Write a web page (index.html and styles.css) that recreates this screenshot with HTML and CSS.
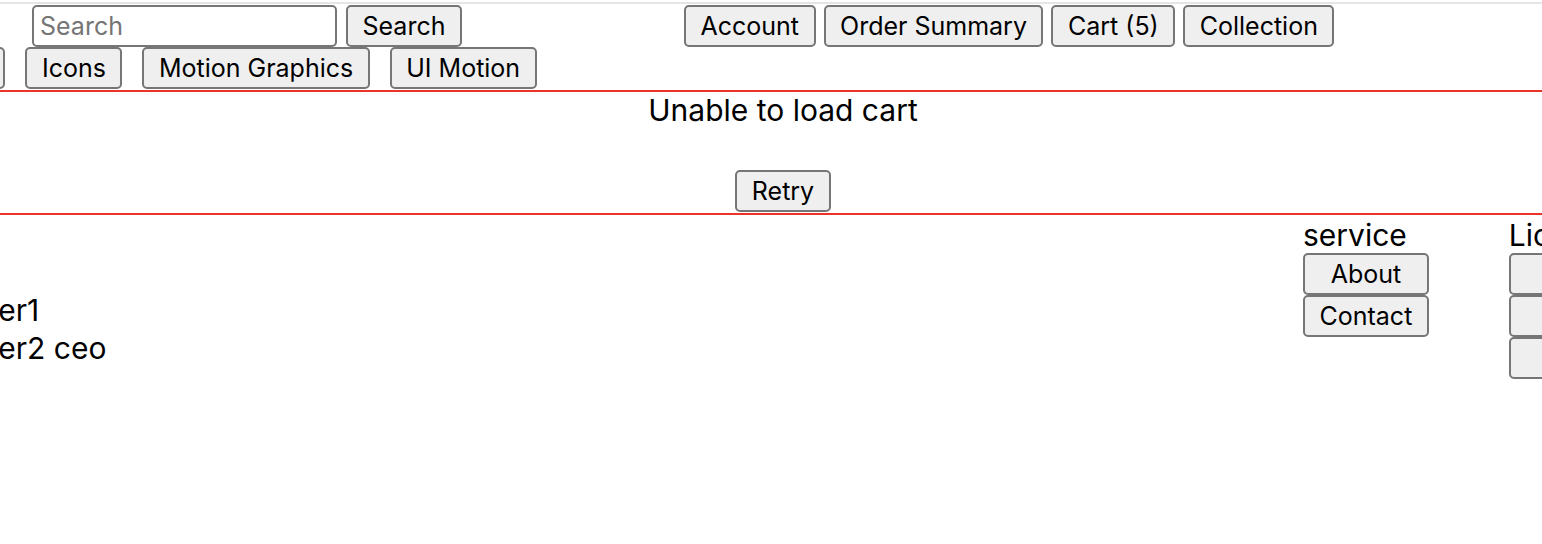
FILE: index.html
```html
<!DOCTYPE html>
<html lang="en">
<head>
<meta charset="utf-8">
<title>Cart</title>
<link rel="stylesheet" href="styles.css">
</head>
<body>
<div class="viewport">
  <div class="page">
    <header class="header">
      <div class="row-top">
        <form class="search">
          <input class="search-input" type="text" placeholder="Search">
          <button class="btn" type="button">Search</button>
        </form>
        <nav class="nav">
          <button class="btn" type="button">Account</button>
          <button class="btn" type="button">Order Summary</button>
          <button class="btn" type="button">Cart (5)</button>
          <button class="btn" type="button">Collection</button>
        </nav>
      </div>
      <div class="categories">
        <button class="btn" type="button">Illustration</button>
        <button class="btn" type="button">Icons</button>
        <button class="btn" type="button">Motion Graphics</button>
        <button class="btn" type="button">UI Motion</button>
      </div>
    </header>
    <section class="error">
      <p class="error-msg">Unable to load cart</p>
      <button class="btn" type="button">Retry</button>
    </section>
    <footer class="footer">
      <div class="team">
        <p>Member1</p>
        <p>Member2 ceo</p>
      </div>
      <div class="col">
        <h3 class="col-title">service</h3>
        <button class="btn" type="button">About</button>
        <button class="btn" type="button">Contact</button>
      </div>
      <div class="col">
        <h3 class="col-title">Licensing &amp; Legal</h3>
        <button class="btn" type="button">Terms</button>
        <button class="btn" type="button">Privacy</button>
        <button class="btn" type="button">Cookies</button>
      </div>
    </footer>
  </div>
</div>
</body>
</html>
```

FILE: styles.css
```css
html, body {
  margin: 0;
  padding: 0;
  background: #ffffff;
}

body {
  font-family: Inter, "Liberation Sans", sans-serif;
  color: #000000;
  font-size: 30px;
}

.viewport {
  display: flex;
  justify-content: center;
  overflow: hidden;
  width: 100%;
}

.page {
  flex: none;
  width: 1866px;
  padding-left: 24px;
  margin-top: 2px;
  border-top: 2px solid #e5e5e5;
}

.btn {
  font-family: inherit;
  font-size: 25px;
  line-height: 30px;
  color: #000000;
  background: #efefef;
  border: 2px solid #767676;
  border-radius: 5px;
  padding: 4px 14.5px;
  margin: 0;
  cursor: pointer;
}

.header {
  display: flex;
  flex-direction: column;
  padding-top: 1px;
}

.row-top {
  display: flex;
  align-items: center;
  padding-left: 182px;
}

.search {
  display: flex;
  gap: 9px;
  margin: 0;
}

.search-input {
  box-sizing: border-box;
  width: 305px;
  height: 42px;
  font-family: inherit;
  font-size: 25px;
  padding: 2px 6px;
  border: 2px solid #767676;
  border-radius: 5px;
  background: #ffffff;
}

.search-input::placeholder {
  color: #757575;
}

.nav {
  display: flex;
  gap: 8px;
  margin-left: 222px;
}

.categories {
  display: flex;
  gap: 20px;
  margin-bottom: 1px;
}

.error {
  display: flex;
  flex-direction: column;
  align-items: center;
  border-top: 2px solid #e8352a;
  border-bottom: 2px solid #e8352a;
  height: 121px;
}

.error-msg {
  margin: 0 0 42px;
  font-size: 30px;
  line-height: 36px;
}

.footer {
  display: flex;
  align-items: flex-start;
  padding-top: 2px;
}

.team {
  flex: none;
  width: 1394px;
  padding-top: 74px;
  padding-left: 59px;
}

.team p {
  margin: 0;
  font-size: 30px;
  line-height: 38px;
}

.col {
  flex: none;
  display: flex;
  flex-direction: column;
  margin-right: 80px;
}

.col-title {
  margin: 0;
  font-size: 30px;
  font-weight: 400;
  line-height: 36px;
  white-space: nowrap;
}
```
